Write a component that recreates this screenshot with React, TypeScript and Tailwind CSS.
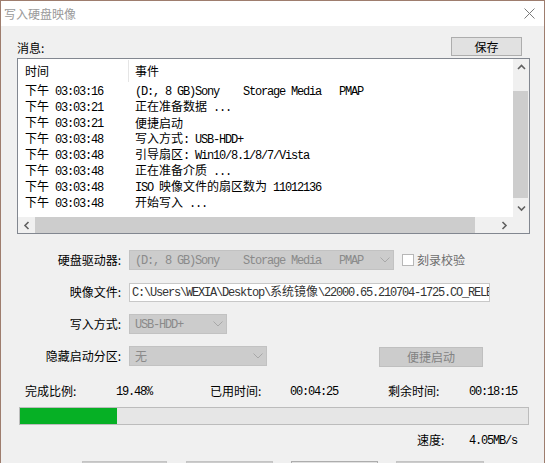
import React from "react";

const CJK_RUN = /([\u3000-\u303f\u4e00-\u9fff\uff00-\uffef]+)/;

const MONO = "font-['Liberation_Mono',monospace] text-[12px] tracking-[-1.2px]";
const HAN = "font-['Noto_Sans_CJK_SC',sans-serif] text-[12px] tracking-normal";

// SimSun-like rendering: half-width latin runs, full-width han runs
function Mixed({ text }: { text: string }) {
  const parts = text.split(CJK_RUN).filter(Boolean);
  return (
    <>
      {parts.map((p, i) =>
        CJK_RUN.test(p) ? (
          <span key={i} className={HAN}>
            {p}
          </span>
        ) : (
          <span key={i} className={MONO}>
            {p}
          </span>
        )
      )}
    </>
  );
}

const LOG: [string, string][] = [
  ["下午 03:03:16", "(D:, 8 GB)Sony    Storage Media   PMAP"],
  ["下午 03:03:21", "正在准备数据 ..."],
  ["下午 03:03:21", "便捷启动"],
  ["下午 03:03:48", "写入方式: USB-HDD+"],
  ["下午 03:03:48", "引导扇区: Win10/8.1/8/7/Vista"],
  ["下午 03:03:48", "正在准备介质 ..."],
  ["下午 03:03:48", "ISO 映像文件的扇区数为 11012136"],
  ["下午 03:03:48", "开始写入 ..."],
];

function Chevron({ dir, className }: { dir: "up" | "down" | "left" | "right"; className?: string }) {
  const pts = {
    up: "1,5 4.5,1.5 8,5",
    down: "1,1.5 4.5,5 8,1.5",
    left: "5.5,1 2,4.5 5.5,8",
    right: "2.5,1 6,4.5 2.5,8",
  }[dir];
  const size = dir === "up" || dir === "down" ? { w: 9, h: 7 } : { w: 8, h: 9 };
  return (
    <svg width={size.w} height={size.h} viewBox={`0 0 ${size.w} ${size.h}`} className={className}>
      <polyline points={pts} fill="none" stroke="#606060" strokeWidth="1.6" />
    </svg>
  );
}

function SelectChevron() {
  return (
    <svg width="10" height="6" viewBox="0 0 10 6" className="shrink-0">
      <polyline points="0.5,0.5 5,5 9.5,0.5" fill="none" stroke="#a8a8a8" strokeWidth="1" />
    </svg>
  );
}

function DisabledSelect({ width, text }: { width: string; text: string }) {
  return (
    <div
      className={`${width} h-[20px] flex items-center justify-between border border-[#c2c2c2] bg-[#cccccc] pl-[5px] pr-[3px] text-[#8a8a8a] whitespace-pre overflow-hidden`}
    >
      <span className="leading-[18px]">
        <Mixed text={text} />
      </span>
      <SelectChevron />
    </div>
  );
}

export default function App() {
  return (
    <div className="w-[545px] h-[463px] overflow-hidden border-x border-t border-[#9e7d6e] bg-[#f0f0f0] font-['Noto_Sans_CJK_SC',sans-serif] text-[12px] text-black">
      {/* title bar */}
      <div className="h-[25px] bg-white flex items-center justify-between pl-[3px] pr-[9px]">
        <span className="text-[#9a9a9a] leading-[16px]">写入硬盘映像</span>
        <svg width="11" height="11" viewBox="0 0 11 11">
          <path d="M0.5 0.5 L10.5 10.5 M10.5 0.5 L0.5 10.5" stroke="#7a7a7a" strokeWidth="1" />
        </svg>
      </div>

      <div className="pl-[16px] pr-[14px]">
        {/* message header */}
        <div className="mt-[12px] h-[18px] flex items-end justify-between">
          <span className="leading-[14px] mb-[1px]">消息:</span>
          <div className="mr-[8px] w-[71px] h-[19px] border border-[#adadad] bg-[#e1e1e1] flex items-center justify-center leading-[16px]">
            保存
          </div>
        </div>

        {/* log list */}
        <div className="mt-[2px] h-[176px] w-[513px] border border-[#828790] bg-white flex flex-col">
          <div className="flex flex-1 min-h-0">
            <div className="flex-1 overflow-hidden">
              <div className="h-[24px] flex items-stretch">
                <div className="w-[110px] pl-[7px] flex items-center">
                  <span className="leading-[16px]">时间</span>
                </div>
                <div className="w-px my-[1px] bg-[#e5e5e5]" />
                <div className="pl-[6px] flex items-center">
                  <span className="leading-[16px]">事件</span>
                </div>
              </div>
              {LOG.map(([time, msg], i) => (
                <div key={i} className="h-[16px] flex items-center whitespace-pre">
                  <div className="w-[110px] pl-[7px] leading-[16px]">
                    <Mixed text={time} />
                  </div>
                  <div className="pl-[7px] leading-[16px]">
                    <Mixed text={msg} />
                  </div>
                </div>
              ))}
            </div>
            {/* vertical scrollbar */}
            <div className="w-[16px] bg-[#f0f0f0] flex flex-col">
              <div className="h-[17px] flex items-center justify-center">
                <Chevron dir="up" />
              </div>
              <div className="h-[15px]" />
              <div className="h-[107px] mr-[1px] bg-[#cdcdcd]" />
              <div className="flex-1" />
              <div className="h-[17px] flex items-center justify-center">
                <Chevron dir="down" />
              </div>
            </div>
          </div>
          {/* horizontal scrollbar */}
          <div className="h-[16px] flex bg-[#f0f0f0]">
            <div className="w-[17px] flex items-center justify-center">
              <Chevron dir="left" />
            </div>
            <div className="w-[440px] bg-[#cdcdcd]" />
            <div className="flex-1" />
            <div className="w-[17px] flex items-center justify-center">
              <Chevron dir="right" />
            </div>
            <div className="w-[17px]" />
          </div>
        </div>

        {/* form */}
        <div className="mt-[16px] flex flex-col gap-[12px]">
          <div className="flex items-center h-[20px]">
            <div className="w-[104px] text-right leading-[16px]">硬盘驱动器:</div>
            <div className="ml-[8px]">
              <DisabledSelect width="w-[265px]" text="(D:, 8 GB)Sony    Storage Media   PMAP" />
            </div>
            <div className="ml-[8px] w-[12px] h-[12px] border border-[#b7b7b7] bg-white" />
            <span className="ml-[3px] text-[#6d6d6d] leading-[16px]">刻录校验</span>
          </div>
          <div className="flex items-center h-[20px]">
            <div className="w-[104px] text-right leading-[16px]">映像文件:</div>
            <div className="ml-[8px] w-[361px] h-[19px] border border-[#c8c8c8] bg-white pl-[2px] flex items-center overflow-hidden whitespace-pre text-[#333333]">
              <span className="leading-[17px]">
                <Mixed text="C:\Users\WEXIA\Desktop\系统镜像\22000.65.210704-1725.CO_RELEASE_SVC_PROD1.iso" />
              </span>
            </div>
          </div>
          <div className="flex items-center h-[20px]">
            <div className="w-[104px] text-right leading-[16px]">写入方式:</div>
            <div className="ml-[8px]">
              <DisabledSelect width="w-[98px]" text="USB-HDD+" />
            </div>
          </div>
          <div className="flex items-center h-[20px]">
            <div className="w-[104px] text-right leading-[16px]">隐藏启动分区:</div>
            <div className="ml-[8px]">
              <DisabledSelect width="w-[138px]" text="无" />
            </div>
            <div className="ml-[112px] mt-[2px] w-[104px] h-[20px] border border-[#bfbfbf] bg-[#cccccc] text-[#838383] flex items-center justify-center leading-[16px]">
              便捷启动
            </div>
          </div>
        </div>

        {/* stats */}
        <div className="mt-[17px] h-[16px] pl-[8px] flex items-center whitespace-pre leading-[16px]">
          <span className="w-[91px]">完成比例:</span>
          <span className="w-[94px]">
            <Mixed text="19.48%" />
          </span>
          <span className="w-[80px]">已用时间:</span>
          <span className="w-[98px]">
            <Mixed text="00:04:25" />
          </span>
          <span className="w-[81px]">剩余时间:</span>
          <span>
            <Mixed text="00:18:15" />
          </span>
        </div>

        <div className="mt-[8px] ml-[2px] w-[510px] h-[18px] border border-[#bcbcbc] bg-[#e6e6e6] flex">
          <div className="w-[97px] h-full bg-[#06b025]" />
        </div>

        <div className="mt-[7px] h-[16px] pl-[400px] flex items-center whitespace-pre leading-[16px]">
          <span className="w-[52px]">速度:</span>
          <span>
            <Mixed text="4.05MB/s" />
          </span>
        </div>

        {/* bottom buttons (mostly below the fold) */}
        <div className="mt-[13px] pl-[65px] flex">
          <div className="w-[85px] h-[23px] border border-[#c4c4c4] bg-[#cccccc] text-[#838383] flex items-center justify-center">
            格式化
          </div>
          <div className="ml-[19px] w-[87px] h-[23px] border border-[#c4c4c4] bg-[#cccccc] text-[#838383] flex items-center justify-center">
            写入
          </div>
          <div className="ml-[18px] w-[87px] h-[23px] border border-[#adadad] bg-[#e1e1e1] flex items-center justify-center">
            终止[A]
          </div>
          <div className="ml-[18px] w-[88px] h-[23px] border border-[#c4c4c4] bg-[#cccccc] text-[#838383] flex items-center justify-center">
            返回
          </div>
        </div>
      </div>
    </div>
  );
}
